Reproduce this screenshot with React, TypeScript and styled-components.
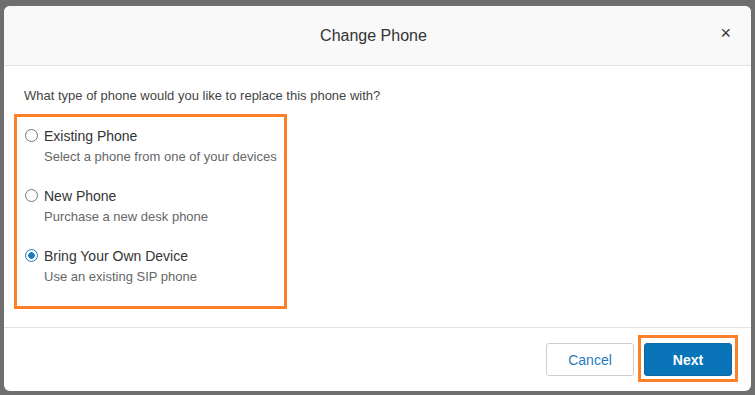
import styled, { createGlobalStyle } from "styled-components";

const GlobalStyle = createGlobalStyle`
  html, body {
    margin: 0;
    padding: 0;
    background: #6e6e6e;
    font-family: "Liberation Sans", Arial, sans-serif;
  }
`;

type Option = { id: string; title: string; hint: string };

const options: Option[] = [
  { id: "existing", title: "Existing Phone", hint: "Select a phone from one of your devices" },
  { id: "new", title: "New Phone", hint: "Purchase a new desk phone" },
  { id: "byod", title: "Bring Your Own Device", hint: "Use an existing SIP phone" },
];

const App = () => {
  const selected = "byod";

  return (
    <>
      <GlobalStyle />
      <Backdrop>
        <Modal>
          <Header>
            <Title>Change Phone</Title>
            <Close aria-label="close">×</Close>
          </Header>
          <Body>
            <Question>What type of phone would you like to replace this phone with?</Question>
            <Highlight>
              <OptionList>
                {options.map((o) => (
                  <OptionRow key={o.id}>
                    <Radio $checked={o.id === selected} />
                    <OptionText>
                      <OptionTitle>{o.title}</OptionTitle>
                      <OptionHint>{o.hint}</OptionHint>
                    </OptionText>
                  </OptionRow>
                ))}
              </OptionList>
            </Highlight>
          </Body>
          <Footer>
            <CancelBtn>Cancel</CancelBtn>
            <ButtonHighlight>
              <NextBtn>Next</NextBtn>
            </ButtonHighlight>
          </Footer>
        </Modal>
      </Backdrop>
    </>
  );
};

const Backdrop = styled.div`
  width: 755px;
  height: 395px;
  box-sizing: border-box;
  padding: 6px 4px 4px 4px;
  overflow: hidden;
`;

const Modal = styled.div`
  width: 747px;
  height: 385px;
  background: #fff;
  border-radius: 6px;
  overflow: hidden;
  display: flex;
  flex-direction: column;
`;

const Header = styled.div`
  height: 59px;
  flex-shrink: 0;
  background: #f9f9f9;
  border-bottom: 1px solid #e3e3e3;
  display: flex;
  align-items: center;
  justify-content: center;
  position: relative;
`;

const Title = styled.div`
  font-size: 16px;
  color: #333;
  margin: 1px 8px 0 0;
`;

const Close = styled.span`
  position: absolute;
  right: 20px;
  top: 18px;
  font-size: 18px;
  color: #333;
  line-height: 1;
`;

const Body = styled.div`
  flex: 1;
  padding: 22px 20px 0 20px;
  border-bottom: 1px solid #e3e3e3;
`;

const Question = styled.div`
  font-size: 13px;
  color: #444;
  line-height: 15px;
`;

const Highlight = styled.div`
  box-sizing: border-box;
  width: 273px;
  margin: 11px 0 0 -10px;
  border: 3px solid #fd7f28;
  padding: 11px 0 22px 8px;
`;

const OptionList = styled.div`
  display: flex;
  flex-direction: column;
  gap: 24px;
`;

const OptionRow = styled.div`
  display: flex;
  align-items: flex-start;
  gap: 6px;
`;

const Radio = styled.span<{ $checked: boolean }>`
  width: 11px;
  height: 11px;
  margin-top: 1px;
  border-radius: 50%;
  border: 1px solid ${(p) => (p.$checked ? "#1a7bc0" : "#777")};
  background: ${(p) => (p.$checked ? "radial-gradient(circle, #1a7bc0 0 3px, #fff 3.5px)" : "#fff")};
  flex-shrink: 0;
`;

const OptionText = styled.div`
  display: flex;
  flex-direction: column;
  gap: 5px;
`;

const OptionTitle = styled.div`
  font-size: 14px;
  line-height: 16px;
  color: #333;
`;

const OptionHint = styled.div`
  font-size: 13px;
  line-height: 15px;
  color: #666;
`;

const Footer = styled.div`
  height: 63px;
  flex-shrink: 0;
  display: flex;
  align-items: center;
  justify-content: flex-end;
  padding-right: 13px;
  gap: 4px;
`;

const BaseBtn = styled.button`
  width: 88px;
  height: 33px;
  border-radius: 3px;
  font-family: "Liberation Sans", Arial, sans-serif;
  font-size: 14px;
  cursor: pointer;
`;

const CancelBtn = styled(BaseBtn)`
  background: #fff;
  border: 1px solid #cfcfcf;
  color: #1f7cc1;
`;

const ButtonHighlight = styled.div`
  border: 3px solid #fd7f28;
  padding: 5px 3px 3px 3px;
  margin-bottom: 2px;
`;

const NextBtn = styled(BaseBtn)`
  display: block;
  background: #0a74b9;
  border: 1px solid #0a6aa8;
  color: #fff;
  font-weight: bold;
`;

export default App;
